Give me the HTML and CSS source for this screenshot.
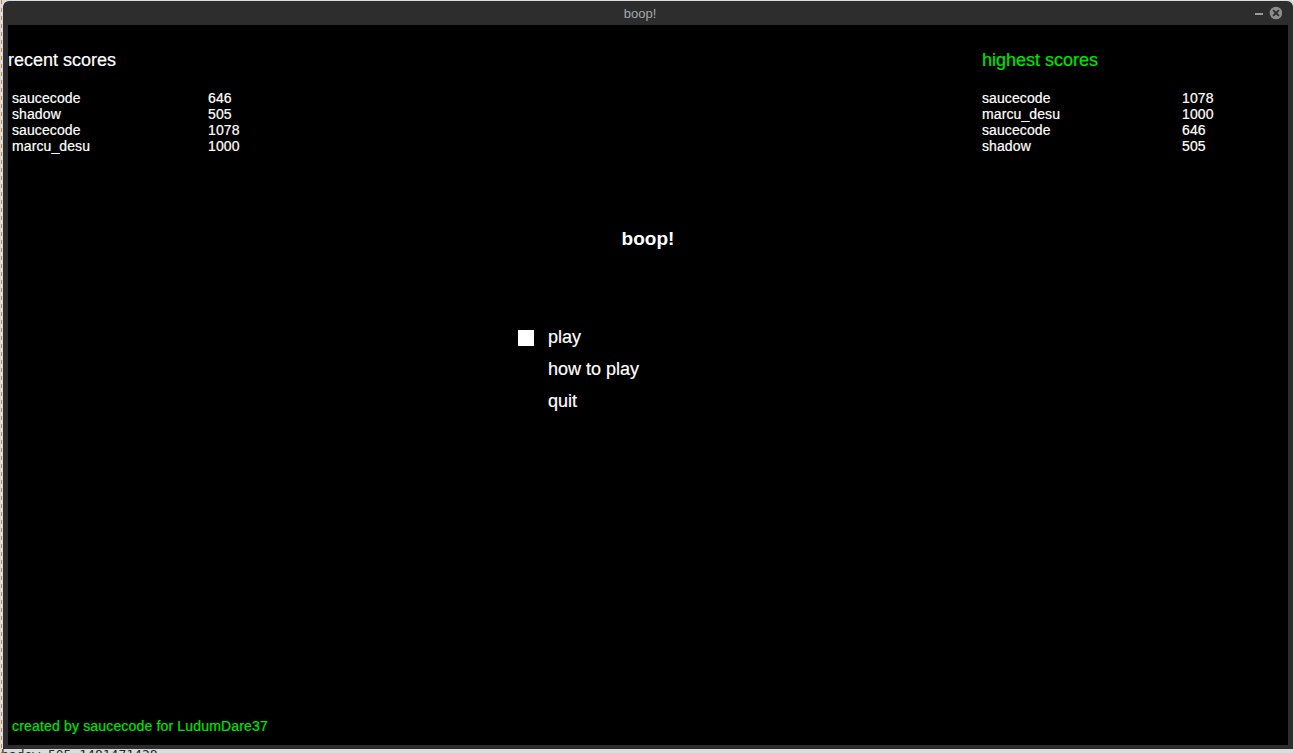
FILE: index.html
```html
<!DOCTYPE html>
<html>
<head>
<meta charset="utf-8">
<title>boop!</title>
<link rel="stylesheet" href="styles.css">
</head>
<body>
<div class="window">
  <div class="titlebar">
    <span class="title">boop!</span>
    <div class="controls">
      <svg width="27" height="14" viewBox="0 0 27 14">
        <rect x="0" y="7" width="8" height="2" fill="#9a9a9a"/>
        <circle cx="21" cy="7" r="6.3" fill="#8c8c8c"/>
        <path d="M18.6 4.6 L23.4 9.4 M23.4 4.6 L18.6 9.4" stroke="#2d2d2d" stroke-width="1.8" stroke-linecap="round"/>
      </svg>
    </div>
  </div>
  <div class="frame">
    <main class="canvas">
      <div class="boards">
        <section class="board recent">
          <h2 class="board-title">recent scores</h2>
          <div class="scores">
            <span>saucecode</span><span>646</span>
            <span>shadow</span><span>505</span>
            <span>saucecode</span><span>1078</span>
            <span>marcu_desu</span><span>1000</span>
          </div>
        </section>
        <section class="board highest">
          <h2 class="board-title">highest scores</h2>
          <div class="scores">
            <span>saucecode</span><span>1078</span>
            <span>marcu_desu</span><span>1000</span>
            <span>saucecode</span><span>646</span>
            <span>shadow</span><span>505</span>
          </div>
        </section>
      </div>
      <h1 class="logo">boop!</h1>
      <ul class="menu">
        <li><span class="cursor on"></span><span>play</span></li>
        <li><span class="cursor"></span><span>how to play</span></li>
        <li><span class="cursor"></span><span>quit</span></li>
      </ul>
      <footer class="credit">created by saucecode for LudumDare37</footer>
    </main>
  </div>
</div>
<div class="behind">hadow 505 1481471428</div>
</body>
</html>
```
FILE: styles.css
```css
html, body {
  margin: 0;
  padding: 0;
}
body {
  width: 1293px;
  height: 753px;
  overflow: hidden;
  background-color: #dcdcdc;
  background-image: repeating-linear-gradient(to bottom, #c8834a 0 4px, transparent 4px 8px);
  background-size: 1px 100%;
  background-position: 1px 0;
  background-repeat: no-repeat;
  font-family: "Liberation Sans", Arial, sans-serif;
}
.window {
  margin: 1px 0 0 3px;
  width: 1290px;
  height: 748px;
  background: #2d2d2d;
  border-radius: 6px 6px 0 0;
  display: flex;
  flex-direction: column;
}
.titlebar {
  height: 24px;
  flex-shrink: 0;
  display: flex;
  align-items: center;
}
.title {
  flex: 1;
  text-align: center;
  padding-left: 22px;
  color: #a3a8ad;
  font-size: 13px;
  line-height: 16px;
  margin-top: 2px;
}
.controls {
  display: flex;
  padding-right: 11px;
}
.controls svg {
  display: block;
}
.frame {
  padding: 0 5px;
}
.canvas {
  width: 1280px;
  height: 720px;
  box-sizing: border-box;
  background: #000;
  color: #fff;
  display: flex;
  flex-direction: column;
  padding-top: 25px;
  -webkit-text-stroke: 0.2px currentColor;
}
.boards {
  display: flex;
  justify-content: space-between;
}
.board-title {
  margin: 0;
  font-size: 18px;
  line-height: 20px;
  font-weight: normal;
  letter-spacing: 0;
}
.scores {
  margin-top: 20px;
  display: grid;
  grid-template-columns: 196px auto;
  font-size: 14px;
  line-height: 16px;
  letter-spacing: 0.1px;
}
.recent .scores {
  padding-left: 4px;
}
.highest {
  width: 306px;
}
.highest .scores {
  grid-template-columns: 200px auto;
}
.highest .board-title {
  color: #00e400;
}
.logo {
  margin: 73px 0 0;
  font-size: 19px;
  line-height: 24px;
  font-weight: bold;
  text-align: center;
  -webkit-text-stroke: 0;
}
.menu {
  list-style: none;
  margin: 70px 0 0 510px;
  padding: 0;
  font-size: 18px;
  line-height: 32px;
}
.menu li {
  display: flex;
  align-items: flex-start;
}
.cursor {
  width: 16px;
  height: 16px;
  margin: 9px 14px 0 0;
  flex-shrink: 0;
}
.cursor.on {
  background: #fff;
}
.credit {
  margin-top: auto;
  padding: 0 0 11px 4px;
  font-size: 14px;
  line-height: 16px;
  letter-spacing: 0.17px;
  color: #00e400;
}
.behind {
  font-family: "DejaVu Sans Mono", monospace;
  font-size: 13px;
  line-height: 12px;
  color: #2a2a2a;
  padding-left: 1px;
  white-space: pre;
}
```
